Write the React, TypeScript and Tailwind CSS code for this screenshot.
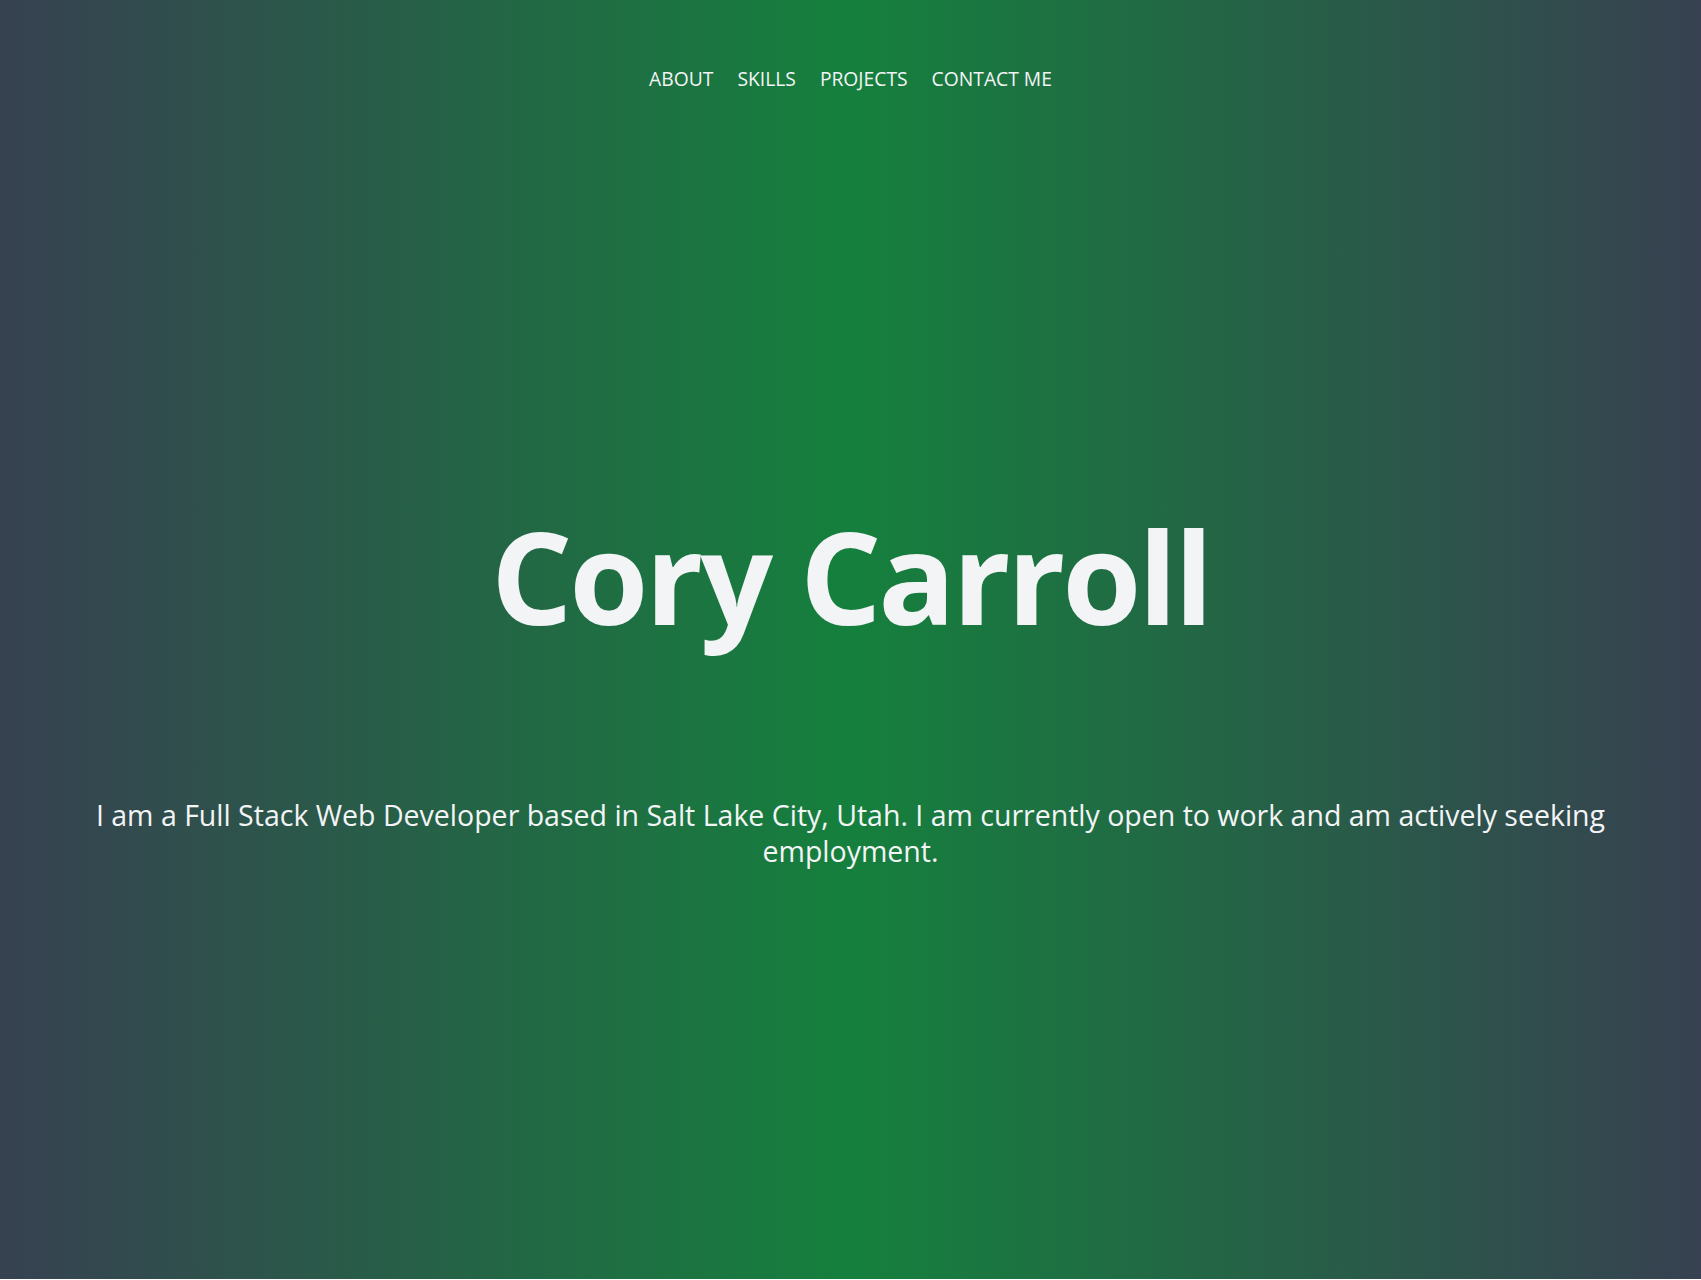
import React from "react";

export default function App() {
  return (
    <div className="h-[1279px] w-full bg-linear-to-r/srgb from-[#374151] via-[#15803d] to-[#374151] text-[#f3f4f6] flex flex-col items-center font-['Open_Sans',sans-serif]">
      <nav className="pt-[64px] flex gap-[24px] text-[19.3px] leading-[30px]">
        <a href="#about">ABOUT</a>
        <a href="#skills">SKILLS</a>
        <a href="#projects">PROJECTS</a>
        <a href="#contact">CONTACT ME</a>
      </nav>
      <h1 className="mt-[418px] text-[128px] leading-[1] font-bold tracking-[-3.2px]">Cory Carroll</h1>
      <p className="mt-[157px] px-20 text-center text-[28.5px] leading-[36px]">
        I am a Full Stack Web Developer based in Salt Lake City, Utah. I am currently open to work and am actively seeking employment.
      </p>
    </div>
  );
}
